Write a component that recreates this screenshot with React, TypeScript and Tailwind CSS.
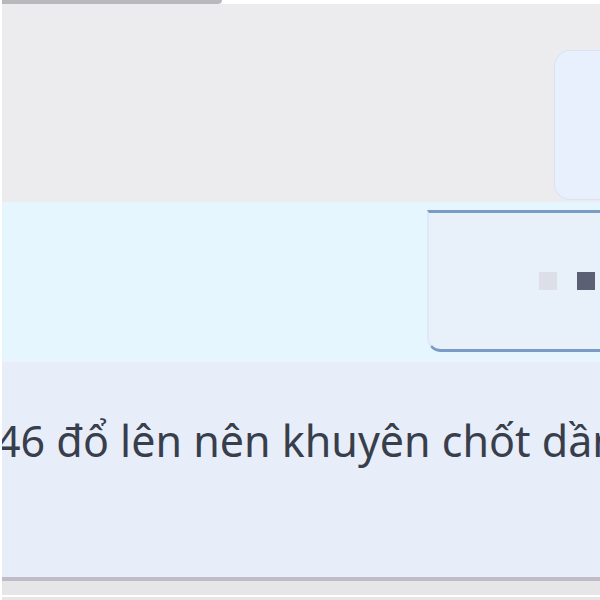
import React from "react";

export default function App() {
  return (
    <div className="w-[600px] h-[600px] overflow-hidden bg-[#ececee] flex flex-col border-l-2 border-white font-['Noto_Sans',sans-serif]">
      <div className="h-[4px] flex bg-white shrink-0">
        <div className="w-[220px] h-full bg-[#b9b9bd] rounded-br-md" />
      </div>
      <div className="h-[198px] shrink-0 bg-[#ececee] flex justify-end items-start pt-[46px]">
        <div className="w-[46px] h-[150px] rounded-l-2xl border border-r-0 border-[#d9e3f3] bg-[#e8f0fd]" />
      </div>
      <div className="h-[158px] shrink-0 bg-[#e6f6fe] flex justify-end items-center">
        <div className="w-[173px] h-[142px] bg-[#e8f0fa] border-y-[3px] border-[#7b9bc7] border-l-2 border-l-[#dfe9f6] rounded-bl-[14px] flex items-center justify-end gap-[20px] pr-[5px]">
          <div className="w-[18px] h-[18px] bg-[#dcdfe8]" />
          <div className="w-[18px] h-[18px] bg-[#5b6075]" />
        </div>
      </div>
      <div className="h-[2px] shrink-0 bg-[#eef3fb]" />
      <div className="h-[215px] shrink-0 bg-[#e8eef9] pt-[57px] overflow-hidden">
        <p className="text-[43px] leading-none text-[#383e4b] whitespace-nowrap -ml-[6px]">
          46 đổ lên nên khuyên chốt dần
        </p>
      </div>
      <div className="h-[4px] shrink-0 bg-[#bebdc7]" />
      <div className="flex-1 bg-[#e6e6e8] flex flex-col justify-end">
        <div className="h-[2px] bg-white mb-[3px]" />
      </div>
    </div>
  );
}
